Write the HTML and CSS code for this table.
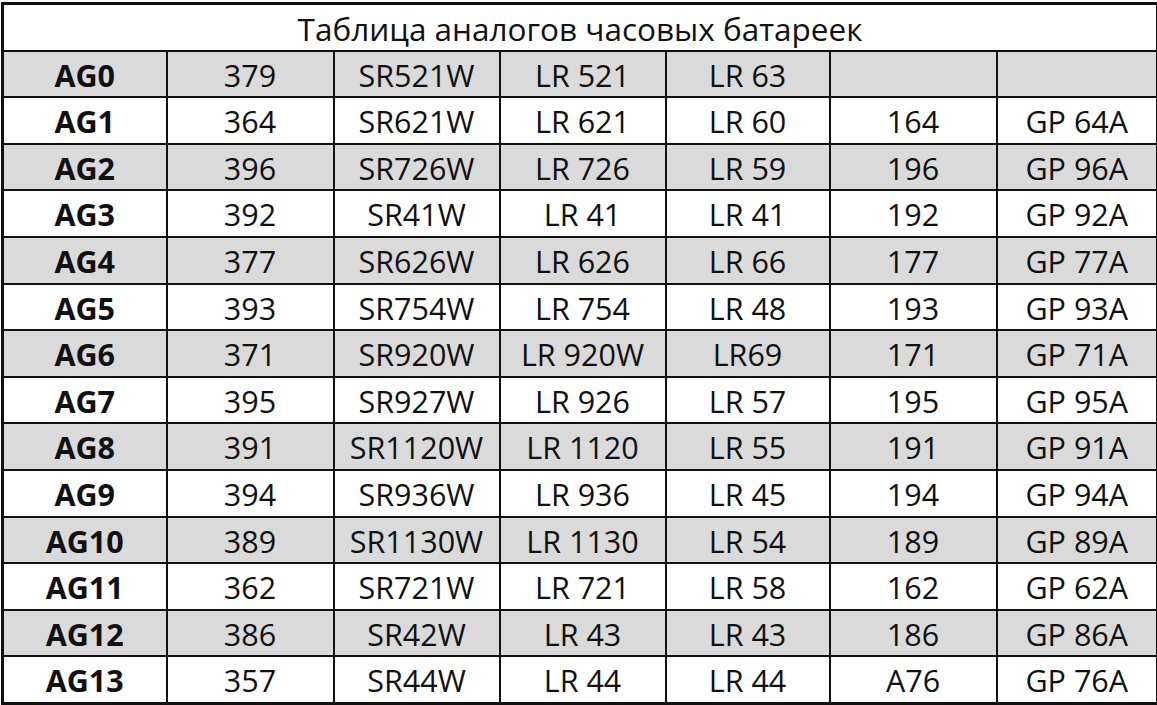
FILE: index.html
```html
<!DOCTYPE html>
<html lang="ru">
<head>
<meta charset="utf-8">
<title>Таблица аналогов часовых батареек</title>
<link rel="stylesheet" href="styles.css">
</head>
<body>
<div class="wrap">
<table class="batt">
<colgroup>
<col class="c1"><col class="c2"><col class="c3"><col class="c4"><col class="c5"><col class="c6"><col class="c7">
</colgroup>
<thead>
<tr><th colspan="7" class="title">Таблица аналогов часовых батареек</th></tr>
</thead>
<tbody>
<tr class="g"><th>AG0</th><td>379</td><td>SR521W</td><td>LR 521</td><td>LR 63</td><td></td><td></td></tr>
<tr><th>AG1</th><td>364</td><td>SR621W</td><td>LR 621</td><td>LR 60</td><td>164</td><td>GP 64A</td></tr>
<tr class="g"><th>AG2</th><td>396</td><td>SR726W</td><td>LR 726</td><td>LR 59</td><td>196</td><td>GP 96A</td></tr>
<tr><th>AG3</th><td>392</td><td>SR41W</td><td>LR 41</td><td>LR 41</td><td>192</td><td>GP 92A</td></tr>
<tr class="g"><th>AG4</th><td>377</td><td>SR626W</td><td>LR 626</td><td>LR 66</td><td>177</td><td>GP 77A</td></tr>
<tr><th>AG5</th><td>393</td><td>SR754W</td><td>LR 754</td><td>LR 48</td><td>193</td><td>GP 93A</td></tr>
<tr class="g"><th>AG6</th><td>371</td><td>SR920W</td><td>LR 920W</td><td>LR69</td><td>171</td><td>GP 71A</td></tr>
<tr><th>AG7</th><td>395</td><td>SR927W</td><td>LR 926</td><td>LR 57</td><td>195</td><td>GP 95A</td></tr>
<tr class="g"><th>AG8</th><td>391</td><td>SR1120W</td><td>LR 1120</td><td>LR 55</td><td>191</td><td>GP 91A</td></tr>
<tr><th>AG9</th><td>394</td><td>SR936W</td><td>LR 936</td><td>LR 45</td><td>194</td><td>GP 94A</td></tr>
<tr class="g"><th>AG10</th><td>389</td><td>SR1130W</td><td>LR 1130</td><td>LR 54</td><td>189</td><td>GP 89A</td></tr>
<tr><th>AG11</th><td>362</td><td>SR721W</td><td>LR 721</td><td>LR 58</td><td>162</td><td>GP 62A</td></tr>
<tr class="g"><th>AG12</th><td>386</td><td>SR42W</td><td>LR 43</td><td>LR 43</td><td>186</td><td>GP 86A</td></tr>
<tr><th>AG13</th><td>357</td><td>SR44W</td><td>LR 44</td><td>LR 44</td><td>A76</td><td>GP 76A</td></tr>
</tbody>
</table>
</div>
</body>
</html>
```
FILE: styles.css
```css
html, body {
  margin: 0;
  padding: 0;
  background: #ffffff;
}
.wrap {
  padding: 2px 0 0 1px;
}
.batt {
  border-collapse: collapse;
  table-layout: fixed;
  width: 1155px;
  border: 3px solid #111;
  font-family: "Open Sans", Lato, "Liberation Sans", sans-serif;
  font-size: 30.5px;
  color: #111111;
}
.c1 { width: 164px; }
.c2 { width: 167px; }
.c3 { width: 166px; }
.c4 { width: 166px; }
.c5 { width: 164px; }
.c6 { width: 167px; }
.c7 { width: 161px; }
.batt th, .batt td {
  border: 2px solid #111;
  height: 42.6px;
  padding: 2px 0 0 0;
  text-align: center;
  vertical-align: middle;
  font-weight: 400;
  white-space: nowrap;
  line-height: 1;
}
.batt tbody th {
  font-weight: 700;
}
.batt .title {
  font-weight: 400;
  font-size: 31.5px;
  background: #ffffff;
}
.batt tr.g th, .batt tr.g td {
  background: #dadada;
}
```
